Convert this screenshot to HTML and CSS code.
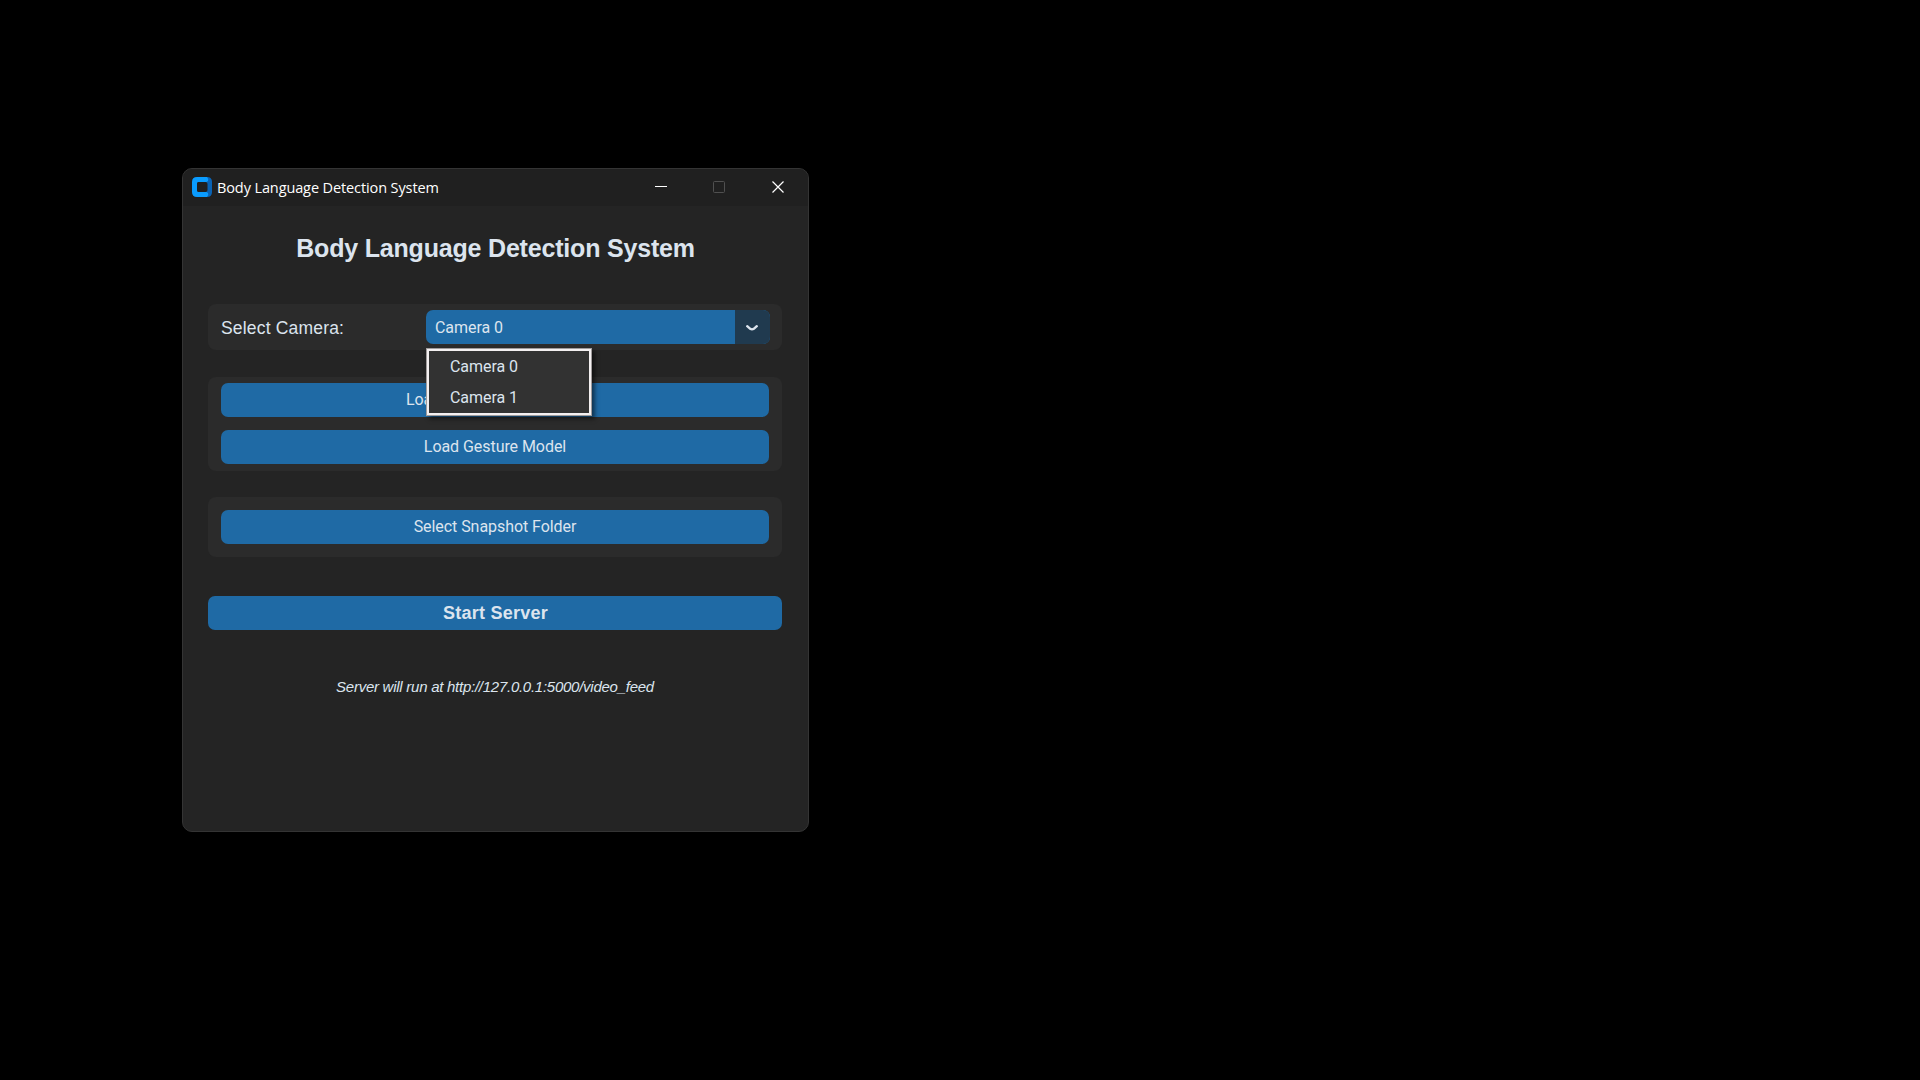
FILE: index.html
```html
<!DOCTYPE html>
<html lang="en">
<head>
<meta charset="utf-8">
<title>Body Language Detection System</title>
<link rel="stylesheet" href="styles.css">
</head>
<body>
<main class="window">
  <header class="titlebar">
    <svg class="app-icon" width="20" height="20" viewBox="0 0 20 20">
      <path fill="#0a63b4" d="M12 0H15Q20 0 20 5V15Q20 20 15 20H12Z"/>
      <path fill="#0a9cff" d="M5 0H15Q17 2 16 4L14.500 5H7Q5 5 5 7V13Q5 15 7 15H14.500L16 16Q17 18 15 20H5Q0 20 0 15V5Q0 0 5 0Z"/>
      <rect x="5" y="5" width="10.500" height="10" rx="2" fill="#202020"/>
    </svg>
    <span class="caption">Body Language Detection System</span>
    <div class="controls">
      <span class="control"><svg width="12" height="12"><path d="M0 5.500H12" stroke="#fff"/></svg></span>
      <span class="control"><svg width="12" height="12"><rect x=".5" y=".5" width="11" height="11" rx="1" fill="none" stroke="#505050"/></svg></span>
      <span class="control"><svg width="12" height="12"><path d="M.5.5l11 11M11.500.5l-11 11" stroke="#fff" stroke-width="1.200"/></svg></span>
    </div>
  </header>
  <div class="content">
    <h1 class="heading">Body Language Detection System</h1>
    <section class="panel camera-panel">
      <span class="label">Select Camera:</span>
      <div class="select">
        <span class="value">Camera 0</span>
        <span class="arrow"><svg width="14" height="8" viewBox="0 0 14 8"><path d="M2.200 2.200L5.200 4.800Q7 6 8.800 4.800L11.800 2.200" fill="none" stroke="#dce4ee" stroke-width="2.400" stroke-linecap="round"/></svg></span>
        <ul class="menu">
          <li class="option">Camera 0</li>
          <li class="option">Camera 1</li>
        </ul>
      </div>
    </section>
    <section class="panel model-panel">
      <button class="button covered">Loa</button>
      <button class="button">Load Gesture Model</button>
    </section>
    <section class="panel folder-panel">
      <button class="button">Select Snapshot Folder</button>
    </section>
    <button class="button start">Start Server</button>
    <p class="note">Server will run at http://127.0.0.1:5000/video_feed</p>
  </div>
</main>
</body>
</html>
```
FILE: styles.css
```css
* { box-sizing: border-box; }
body { margin: 0; height: 1080px; overflow: hidden; background: #000; padding: 168px 0 0 182px; }
.window { width: 627px; height: 664px; border: 1px solid #343434; border-radius: 10px; background: #242424; overflow: hidden; }
.titlebar { display: flex; align-items: center; height: 37px; padding: 0 1px 1px 9px; background: #202020; }
.app-icon { flex: none; }
.caption { margin-left: 5px; padding-top: 2px; font: 14.500px/20px "Open Sans", "Noto Sans", sans-serif; color: #fff; letter-spacing: -0.110px; white-space: nowrap; }
.controls { display: flex; margin-left: auto; }
.control { display: flex; width: 58.500px; justify-content: center; }
.content { display: flex; flex-direction: column; padding: 0 26px 0 25px; }
.heading { margin: 26px 0 0; padding-left: 1px; height: 72px; font: bold 25px/32px "Liberation Sans", Arial, sans-serif; letter-spacing: -0.190px; color: #dce4ee; text-align: center; white-space: nowrap; }
.panel { border-radius: 8px; background: #2b2b2b; }
.camera-panel { display: flex; height: 46px; padding: 6px 12px 6px 13px; justify-content: space-between; }
.label { font: 17.500px/36px "Liberation Sans", Arial, sans-serif; letter-spacing: 0.180px; color: #dce4ee; }
.select { position: relative; display: flex; width: 344px; height: 34px; border-radius: 7px; background: #1f6aa5; font: 16px/34px Roboto, sans-serif; letter-spacing: -0.060px; color: #dce4ee; }
.value { flex: 1; padding-left: 9px; line-height: 36px; }
.arrow { display: flex; width: 35px; padding: 2px 1px 0 0; align-items: center; justify-content: center; border-radius: 0 7px 7px 0; background: #203a4f; }
.menu { position: absolute; top: 38px; left: 0; width: 166px; height: 68px; margin: 0; padding: 0 0 0 23px; list-style: none; border: 1px solid #a09c9c; box-shadow: inset 0 0 0 2px #f3eff0, 3px 3px 4px rgba(0, 0, 0, .5); background: #323232; }
.option { height: 31px; line-height: 31px; }
.option:first-child { margin-top: 2px; }
.model-panel { display: flex; flex-direction: column; gap: 13px; height: 94px; margin-top: 27px; padding: 6px 13px; }
.folder-panel { display: flex; flex-direction: column; height: 60px; margin-top: 26px; padding: 13px; }
.button { height: 34px; flex: none; margin: 0; padding: 0; border: 0; border-radius: 7px; background: #1f6aa5; color: #dce4ee; font: 16px/34px Roboto, sans-serif; letter-spacing: -0.060px; }
.covered { padding-left: 185px; text-align: left; }
.start { padding-left: 1px; margin-top: 39px; font: bold 18px/34px "Liberation Sans", Arial, sans-serif; letter-spacing: 0.250px; }
.note { margin: 47px 0 0; font: italic 15px/20px "Liberation Sans", Arial, sans-serif; letter-spacing: -0.260px; color: #dce4ee; text-align: center; }
```
